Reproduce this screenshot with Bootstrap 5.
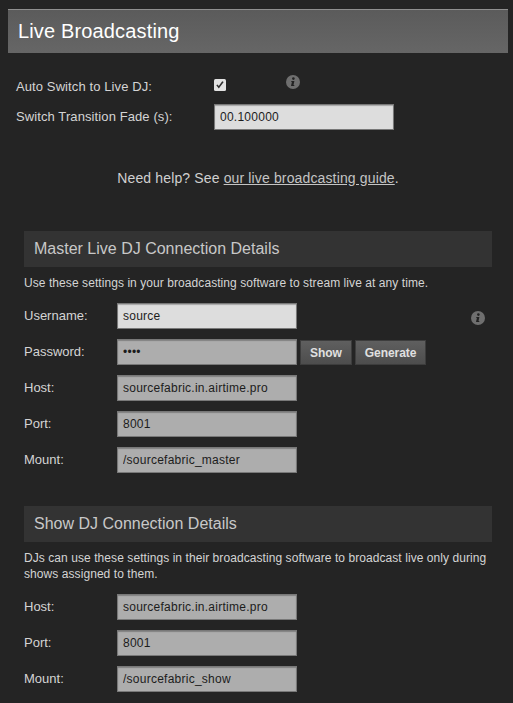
<!DOCTYPE html>
<html lang="en">
<head>
<meta charset="utf-8">
<title>Live Broadcasting</title>
<link href="https://cdn.jsdelivr.net/npm/bootstrap@5.3.0/dist/css/bootstrap.min.css" rel="stylesheet">
<style>
html,body{height:703px;overflow:hidden}
body{background:#242424;color:#d4d4d4;font-family:"Liberation Sans",Arial,sans-serif;font-size:12px;line-height:16px;padding:9px 5px 0 8px}
.page-head{height:44px;background:linear-gradient(#5b5b5b,#666);border-top:1px solid #8f8f8f;color:#fff;font-size:20px;letter-spacing:.15px;line-height:43px;padding-left:10px;margin:0;font-weight:400}
.top-form{padding:23px 0 0 8px}
.frow{display:flex;align-items:center;height:26px;margin-bottom:10px}
.flabel{font-size:13px;margin:0}
.top-form .flabel{width:198px;letter-spacing:.1px}
.sec-form .flabel{width:93px}
.auto-row{height:22px;margin-bottom:6px}
.tick-wrap{width:71px;display:flex;margin-bottom:5px}
.tick-wrap svg{display:block}
.finput{width:180px;height:26px;background:#ddd;border:1px solid #787878;box-shadow:inset 0 1px 1px rgba(0,0,0,.25);color:#1c1c1c;font-size:12px;letter-spacing:.25px;padding:0 5px;outline:0;border-radius:0;font-family:inherit}
.finput.dim{background:#adadad}
.info-ic{display:block;width:14px;height:14px}
.top-info{margin-left:1px;margin-bottom:11px}
.help-line{text-align:center;font-size:14px;letter-spacing:.14px;line-height:20px;margin:38px 0 0;color:#d0d0d0}
.help-line a{color:#c4c4c4}
.sec-form{margin:0 16px}
.sec-head{background:#333;height:36px;line-height:36px;font-size:16px;font-weight:400;color:#c8c8c8;padding-left:10px;margin:0 0 8px}
.sec-note{margin:0 0 12px;line-height:16px;letter-spacing:.07px}
.gbtn{height:25px;padding:0 9px;background:linear-gradient(#5f5f5f,#4d4d4d);border:1px solid #3d3d3d;color:#e0e0e0;font-size:12px;font-weight:700;letter-spacing:-.05px;border-radius:0;line-height:22px;margin:1px 0 0 3px;font-family:inherit}
.first-sec{margin-top:43px}
.second-sec{margin-top:33px}
.sec-info{margin-left:auto;margin-right:7px;margin-top:4px}
</style>
</head>
<body>
<h1 class="page-head">Live Broadcasting</h1>

<div class="top-form">
  <div class="frow auto-row">
    <label class="flabel">Auto Switch to Live DJ:</label>
    <div class="tick-wrap">
      <svg width="12" height="12" viewBox="0 0 12 12"><rect width="12" height="12" rx="1.500" fill="#e2e2e2"/><path d="M2.300 6.300l2.500 3.200 4.900-6.500-1.500-.7-3.400 4.700-1.300-1.600z" fill="#2e2e2e"/></svg>
    </div>
    <svg class="info-ic top-info" viewBox="0 0 14 14"><circle cx="7" cy="7" r="7" fill="#6f6f6f"/><circle cx="7.400" cy="3.600" r="1.300" fill="#222"/><path d="M5.400 6h3l-.9 4h.9l-.2 1H5l.9-4h-.7z" fill="#222"/></svg>
  </div>
  <div class="frow">
    <label class="flabel" for="fade">Switch Transition Fade (s):</label>
    <input class="finput" id="fade" type="text" value="00.100000">
  </div>
</div>

<p class="help-line">Need help? See <a href="#">our live broadcasting guide</a>.</p>

<section class="sec-form first-sec">
  <h2 class="sec-head">Master Live DJ Connection Details</h2>
  <p class="sec-note">Use these settings in your broadcasting software to stream live at any time.</p>
  <div class="frow">
    <label class="flabel">Username:</label>
    <input class="finput" type="text" value="source">
    <svg class="info-ic sec-info" viewBox="0 0 14 14"><circle cx="7" cy="7" r="7" fill="#6f6f6f"/><circle cx="7.400" cy="3.600" r="1.300" fill="#222"/><path d="M5.400 6h3l-.9 4h.9l-.2 1H5l.9-4h-.7z" fill="#222"/></svg>
  </div>
  <div class="frow">
    <label class="flabel">Password:</label>
    <input class="finput dim" type="password" value="aaaa">
    <button class="gbtn" type="button">Show</button>
    <button class="gbtn" type="button">Generate</button>
  </div>
  <div class="frow"><label class="flabel">Host:</label><input class="finput dim" type="text" value="sourcefabric.in.airtime.pro"></div>
  <div class="frow"><label class="flabel">Port:</label><input class="finput dim" type="text" value="8001"></div>
  <div class="frow"><label class="flabel">Mount:</label><input class="finput dim" type="text" value="/sourcefabric_master"></div>
</section>

<section class="sec-form second-sec">
  <h2 class="sec-head">Show DJ Connection Details</h2>
  <p class="sec-note">DJs can use these settings in their broadcasting software to broadcast live only during shows assigned to them.</p>
  <div class="frow"><label class="flabel">Host:</label><input class="finput dim" type="text" value="sourcefabric.in.airtime.pro"></div>
  <div class="frow"><label class="flabel">Port:</label><input class="finput dim" type="text" value="8001"></div>
  <div class="frow"><label class="flabel">Mount:</label><input class="finput dim" type="text" value="/sourcefabric_show"></div>
</section>
<script src="https://cdn.jsdelivr.net/npm/bootstrap@5.3.0/dist/js/bootstrap.bundle.min.js"></script>
</body>
</html>
